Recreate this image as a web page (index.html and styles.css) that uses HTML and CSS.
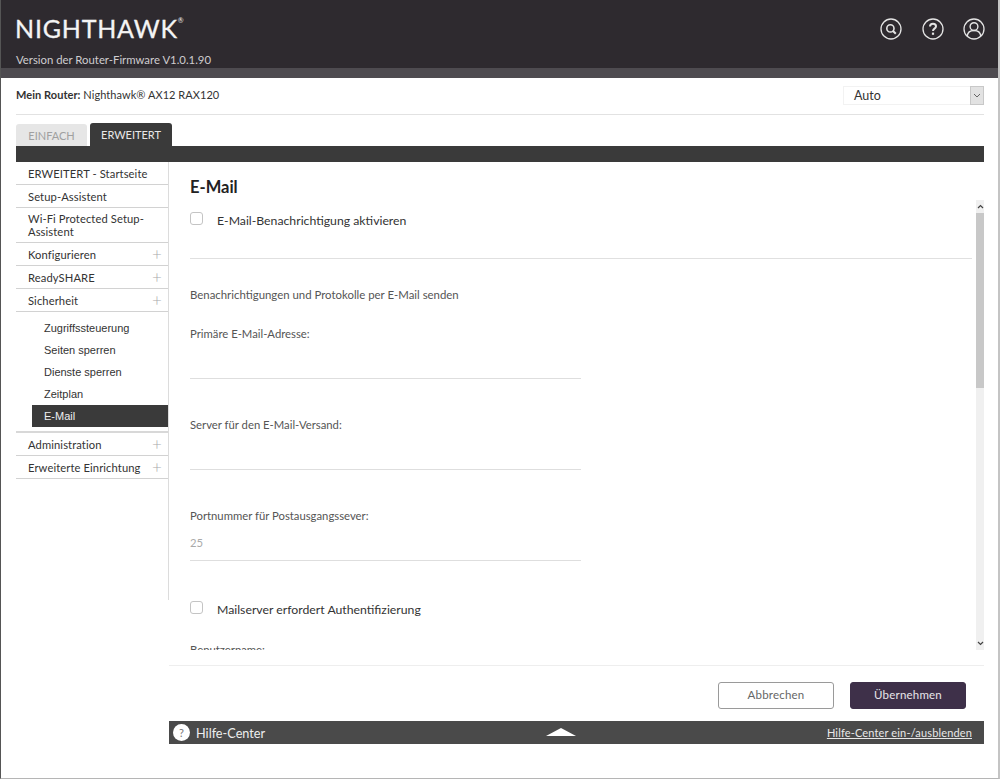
FILE: index.html
```html
<!DOCTYPE html>
<html lang="de">
<head>
  <meta charset="UTF-8">
  <meta name="viewport" content="width=device-width, initial-scale=1.0">
  <title>NETGEAR Router RAX120</title>
  <link rel="stylesheet" href="styles.css">
</head>
<body>
  <div class="page">
    <header class="top">
      <div class="top-main">
        <div class="brand">
          <div class="logo">NIGHTHAWK<sup>®</sup></div>
          <div class="firmware">Version der Router-Firmware V1.0.1.90</div>
        </div>
        <div class="top-icons">
          <svg width="22" height="22" viewBox="0 0 22 22" fill="none" stroke="#e4e4e4">
            <circle cx="11" cy="11" r="10" stroke-width="1.3"/>
            <circle cx="10.4" cy="10.4" r="3.6" stroke-width="1.6"/>
            <path d="M13 13l2.8 2.8" stroke-width="2"/>
          </svg>
          <svg width="22" height="22" viewBox="0 0 22 22" fill="none" stroke="#e4e4e4">
            <circle cx="11" cy="11" r="10" stroke-width="1.3"/>
            <path d="M8 8.6c0-1.8 1.3-2.9 3-2.9s3 1 3 2.6c0 2.4-3 2.3-3 4.6" stroke-width="2"/>
            <path d="M11 14.6v2.2" stroke-width="2.2"/>
          </svg>
          <svg width="22" height="22" viewBox="0 0 22 22" fill="none" stroke="#e4e4e4">
            <circle cx="11" cy="11" r="10" stroke-width="1.3"/>
            <circle cx="11" cy="8.6" r="3.9" stroke-width="1.4"/>
            <path d="M4.3 18c.3-3.600 3-5.500 6.700-5.500s6.400 1.900 6.700 5.500" stroke-width="1.4"/>
          </svg>
        </div>
      </div>
      <div class="top-strip"></div>
    </header>

    <div class="router-row">
      <p class="router-name"><strong>Mein Router:</strong> Nighthawk® AX12 RAX120</p>
      <div class="lang-select">
        <span>Auto</span>
        <span class="lang-arrow">
          <svg width="8" height="5" viewBox="0 0 8 5" fill="none" stroke="#666"><path d="M1 1l3 3 3-3"/></svg>
        </span>
      </div>
    </div>

    <div class="tabs">
      <a class="tab">EINFACH</a>
      <a class="tab active">ERWEITERT</a>
    </div>
    <div class="tab-bar"></div>

    <div class="layout">
      <nav class="side">
        <a class="side-item">ERWEITERT - Startseite</a>
        <a class="side-item">Setup-Assistent</a>
        <a class="side-item wrap">Wi-Fi Protected Setup-Assistent</a>
        <a class="side-item plus">Konfigurieren</a>
        <a class="side-item plus">ReadySHARE</a>
        <a class="side-item plus">Sicherheit</a>
        <div class="sub">
          <a class="sub-item">Zugriffssteuerung</a>
          <a class="sub-item">Seiten sperren</a>
          <a class="sub-item">Dienste sperren</a>
          <a class="sub-item">Zeitplan</a>
          <a class="sub-item current">E-Mail</a>
        </div>
        <a class="side-item plus">Administration</a>
        <a class="side-item plus">Erweiterte Einrichtung</a>
      </nav>

      <main class="content">
        <h1>E-Mail</h1>
        <div class="scroll-area">
          <form class="scroll-inner">
            <label class="check first"><input type="checkbox"> E-Mail-Benachrichtigung aktivieren</label>
            <hr class="divider">
            <p class="note">Benachrichtigungen und Protokolle per E-Mail senden</p>
            <div class="field field-mail">
              <label>Primäre E-Mail-Adresse:</label>
              <input type="text">
            </div>
            <div class="field">
              <label>Server für den E-Mail-Versand:</label>
              <input type="text">
            </div>
            <div class="field">
              <label>Portnummer für Postausgangssever:</label>
              <input type="text" value="25">
            </div>
            <label class="check auth"><input type="checkbox"> Mailserver erfordert Authentifizierung</label>
            <div class="field field-user">
              <label>Benutzername:</label>
              <input type="text">
            </div>
          </form>
          <div class="scrollbar">
            <svg class="arrow-up" width="7" height="5" viewBox="0 0 7 5" fill="none" stroke="#444" stroke-width="1.2"><path d="M1 4l2.500-2.500L6 4"/></svg>
            <div class="thumb"></div>
            <svg class="arrow-down" width="7" height="5" viewBox="0 0 7 5" fill="none" stroke="#444" stroke-width="1.2"><path d="M1 1l2.500 2.500L6 1"/></svg>
          </div>
        </div>
        <div class="actions">
          <button class="btn btn-cancel" type="button">Abbrechen</button>
          <button class="btn btn-apply" type="button">Übernehmen</button>
        </div>
        <div class="help-bar">
          <div class="help-left"><span class="help-icon">?</span>Hilfe-Center</div>
          <div class="help-arrow"></div>
          <a class="help-link">Hilfe-Center ein-/ausblenden</a>
        </div>
      </main>
    </div>
  </div>
</body>
</html>
```

FILE: styles.css
```css
* {
  box-sizing: border-box;
}
body {
  margin: 0;
  font-family: Lato, "Open Sans", sans-serif;
  color: #333;
  background: #fff;
}
.page {
  width: 1000px;
  height: 779px;
  overflow: hidden;
  border-left: 1px solid #555;
  border-right: 2px solid #c4c4c4;
  border-bottom: 1px solid #b5b5b5;
}

/* header */
.top-main {
  height: 68px;
  margin-left: -1px;
  margin-right: -2px;
  padding: 15px 15px 0 16px;
  background: #2e2a2f;
  display: flex;
  justify-content: space-between;
}
.top-strip {
  height: 10px;
  margin-left: -1px;
  margin-right: -2px;
  background: #4e4b50;
}
.logo {
  margin-left: -1px;
  color: #f4f4f4;
  font-size: 25px;
  line-height: 26px;
  letter-spacing: 0.8px;
  white-space: nowrap;
  -webkit-text-stroke: 0.3px #f4f4f4;
}
.logo sup {
  font-size: 7px;
  line-height: 0;
  letter-spacing: 0;
  vertical-align: 15px;
  -webkit-text-stroke: 0;
}
.firmware {
  margin-top: 11px;
  color: #cfcdd0;
  font-size: 11.350px;
  line-height: 16px;
}
.top-icons {
  display: flex;
  gap: 19.500px;
  padding-top: 3px;
}

/* router row */
.router-row {
  height: 37px;
  margin: 0 14px 0 15px;
  border-bottom: 1px solid #e2e2e2;
  display: flex;
  justify-content: space-between;
  align-items: center;
}
.router-name {
  margin: 0 0 3px;
  font-size: 11px;
  letter-spacing: 0.05px;
}
.lang-select {
  width: 141px;
  height: 19px;
  margin-bottom: 1px;
  padding-left: 10px;
  border: 1px solid #f2f2f2;
  display: flex;
  justify-content: space-between;
  align-items: center;
  font-size: 12.500px;
}
.lang-arrow {
  width: 14px;
  height: 19px;
  background: #e2e2e2;
  border: 1px solid #c8c8c8;
  display: flex;
  align-items: center;
  justify-content: center;
  margin-right: -1px;
}

/* tabs */
.tabs {
  margin: 8px 14px 0 15px;
  height: 23px;
  display: flex;
  align-items: flex-end;
  gap: 3px;
}
.tab {
  width: 71px;
  height: 22px;
  background: #e6e6e6;
  border-radius: 3px 3px 0 0;
  color: #a0a0a0;
  font-size: 11px;
  line-height: 23px;
  text-align: center;
}
.tab.active {
  width: 82px;
  height: 23px;
  background: #3a3a3a;
  color: #e8e8e8;
}
.tab-bar {
  height: 16px;
  margin: 0 14px 0 15px;
  background: #3a3a3a;
}

/* sidebar */
.layout {
  display: flex;
  margin: 0 14px 0 15px;
}
.side {
  width: 153px;
  height: 438px;
  flex: none;
  border-right: 1px solid #dcdcdc;
}
.side-item {
  display: block;
  padding: 5px 14px 3px 12px;
  min-height: 23px;
  border-bottom: 1px solid #d2d2d2;
  font-size: 11.200px;
  line-height: 14px;
  letter-spacing: 0.1px;
  color: #333;
  position: relative;
}
.side-item.wrap {
  padding: 4px 24px 4px 12px;
  line-height: 13px;
}
.side-item.plus::after {
  content: "+";
  position: absolute;
  right: 6px;
  top: 2px;
  color: #aaa;
  font-size: 17px;
  line-height: 17px;
  font-weight: 300;
}
.sub {
  padding: 5px 0 4px 16px;
  border-bottom: 2px solid #d8d8d8;
}
.sub-item {
  display: block;
  height: 22px;
  padding-left: 12px;
  font-family: "Liberation Sans", Arial, sans-serif;
  font-size: 11px;
  line-height: 22px;
  color: #333;
}
.sub-item.current {
  background: #3a3a3a;
  color: #eee;
}

/* main */
.content {
  flex: 1;
  min-width: 0;
}
h1 {
  margin: 0;
  height: 38px;
  padding: 16px 0 0 21px;
  font-size: 16.500px;
  line-height: 18px;
  font-weight: 700;
  color: #222;
}
.scroll-area {
  height: 450px;
  display: flex;
}
.scroll-inner {
  flex: 1;
  height: 450px;
  overflow: hidden;
  padding: 0 4px 0 21px;
  font-size: 11.300px;
}
.check {
  display: flex;
  align-items: center;
  gap: 14px;
  height: 16px;
  font-size: 12.250px;
  color: #333;
}
.check input {
  appearance: none;
  width: 13px;
  height: 13px;
  margin: -3px 0 0;
  border: 1px solid #c4c4c4;
  border-radius: 3px;
  background: #fff;
}
.check.first {
  margin-top: 12px;
}
.divider {
  margin: 30px 0 0;
  border: 0;
  border-top: 1px solid #e0e0e0;
}
.note {
  margin: 29px 0 0;
  font-size: 11.400px;
  line-height: 14px;
  color: #555;
}
.field {
  width: 391px;
  height: 91px;
}
.field-mail {
  margin-top: 25px;
}
.field label {
  display: block;
  line-height: 14px;
  color: #555;
}
.field input {
  display: block;
  width: 100%;
  height: 36px;
  margin-top: 2px;
  padding: 0;
  border: 0;
  border-bottom: 1px solid #dedede;
  font: inherit;
  color: #aaa;
  outline: none;
}
.check.auth {
  margin-top: 1px;
}
.field-user {
  margin-top: 26px;
}

/* scrollbar */
.scrollbar {
  width: 8px;
  height: 450px;
  flex: none;
  background: #f0f0f0;
  position: relative;
}
.arrow-up {
  position: absolute;
  top: 4px;
  left: 1px;
}
.arrow-down {
  position: absolute;
  bottom: 4px;
  left: 1px;
}
.thumb {
  position: absolute;
  top: 13px;
  left: 0;
  width: 8px;
  height: 175px;
  background: #c8c8c8;
}

/* buttons */
.actions {
  height: 71px;
  padding: 16px 18px 0 0;
  margin-top: 15px;
  border-top: 1px solid #eee;
  display: flex;
  justify-content: flex-end;
  gap: 16px;
}
.btn {
  width: 116px;
  height: 27px;
  padding-bottom: 3px;
  border-radius: 3px;
  font-family: inherit;
  font-size: 11.500px;
  letter-spacing: 0.2px;
}
.btn-cancel {
  background: #fff;
  border: 1px solid #9a9a9a;
  color: #666;
}
.btn-apply {
  background: #3e3049;
  border: 1px solid #3e3049;
  color: #e8e6ea;
}

/* help bar */
.help-bar {
  height: 23px;
  margin-top: -15px;
  padding: 0 12px 0 4px;
  background: #4a4a4a;
  color: #eee;
  display: flex;
  align-items: center;
  justify-content: space-between;
  position: relative;
}
.help-left {
  display: flex;
  align-items: center;
  gap: 6px;
  font-size: 12.700px;
}
.help-icon {
  width: 17px;
  height: 17px;
  border-radius: 50%;
  background: #fff;
  color: #777;
  font-size: 11px;
  line-height: 17px;
  text-align: center;
}
.help-arrow {
  position: absolute;
  left: 377px;
  top: 7px;
  border-left: 15px solid transparent;
  border-right: 15px solid transparent;
  border-bottom: 8px solid #fff;
}
.help-link {
  font-size: 11px;
  text-decoration: underline;
  color: #e8e8e8;
  letter-spacing: 0.15px;
}
```
